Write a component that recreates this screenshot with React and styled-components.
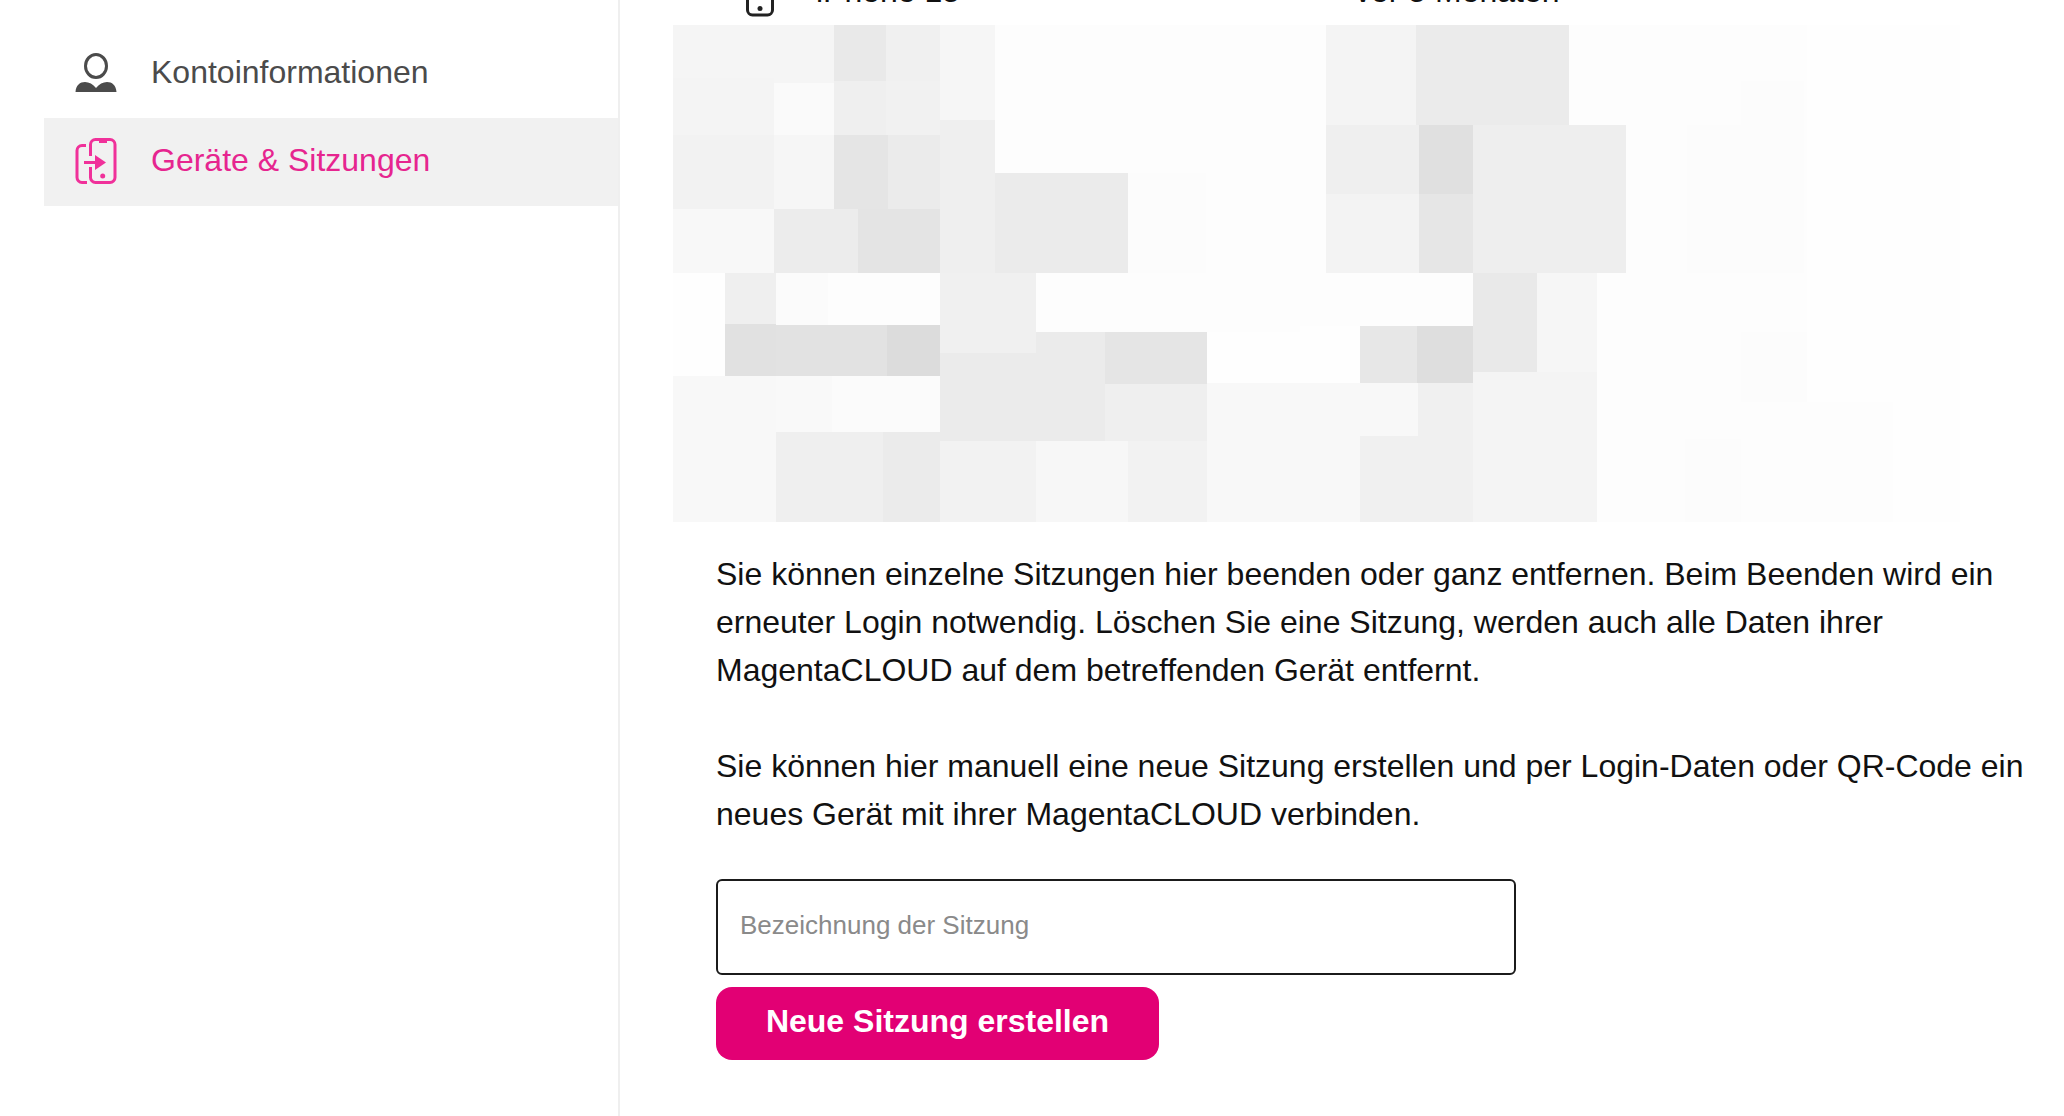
import React from "react";
import styled, { createGlobalStyle } from "styled-components";

const Global = createGlobalStyle`
  html, body { margin: 0; padding: 0; background: #fff; overflow: hidden; }
  body { font-family: "Liberation Sans", Arial, sans-serif; }
`;

const Page = styled.div`
  display: flex;
  width: 2064px;
  height: 1116px;
  overflow: hidden;
`;

const Sidebar = styled.nav`
  box-sizing: border-box;
  flex: 0 0 620px;
  height: 100%;
  padding: 30px 0 0 44px;
  border-right: 2px solid #efefef;
`;

const NavItem = styled.div`
  box-sizing: border-box;
  display: flex;
  align-items: center;
  height: 88px;
  padding: 0 0 4px 31px;
  gap: 34px;
  font-size: 32px;
  color: ${(p) => (p.$active ? "#e6258f" : "#4b4b4b")};
  background: ${(p) => (p.$active ? "#f1f1f1" : "transparent")};
`;

const NavIcon = styled.svg`
  display: block;
  flex: none;
  margin-top: ${(p) => p.$shift || 0}px;
`;

const Main = styled.main`
  flex: 1;
  min-width: 0;
  display: flex;
  flex-direction: column;
`;

const DeviceRow = styled.div`
  position: relative;
  height: 25px;
  overflow: hidden;
  flex: none;
`;

const DeviceText = styled.span`
  position: absolute;
  top: -26px;
  left: ${(p) => p.$left}px;
  font-size: 32px;
  line-height: 34px;
  color: #111;
  white-space: nowrap;
`;

const DeviceIcon = styled.svg`
  position: absolute;
  top: 0;
  left: 126px;
`;

const Mosaic = styled.svg`
  display: block;
  flex: none;
  margin-left: 53px;
`;

const Copy = styled.div`
  padding: 28px 0 0 96px;
  font-size: 32px;
  line-height: 48px;
  color: #111;
`;

const Paragraph = styled.p`
  margin: 0 0 48px;
  white-space: nowrap;
`;

const Form = styled.form`
  display: flex;
  flex-direction: column;
  align-items: flex-start;
  gap: 12px;
  margin: -7px 0 0 96px;
`;

const NameInput = styled.input`
  box-sizing: border-box;
  width: 800px;
  height: 96px;
  padding: 0 22px 3px;
  border: 2px solid #1b1b1b;
  border-radius: 6px;
  background: #fff;
  font: 26px "Liberation Sans", Arial, sans-serif;
  &::placeholder { color: #8a8a8a; opacity: 1; }
`;

const CreateButton = styled.button`
  width: 443px;
  height: 73px;
  padding: 0 0 4px;
  border: 0;
  border-radius: 16px;
  background: #e20074;
  color: #fff;
  font: bold 32px "Liberation Sans", Arial, sans-serif;
`;

const tiles = [
  [620, 25, 1340, 497, "#fdfdfd"],
  [673, 25, 101, 53, "#f5f5f5"], [673, 78, 101, 57, "#f4f4f4"], [673, 135, 101, 74, "#f2f2f2"], [673, 209, 101, 64, "#f8f8f8"],
  [774, 25, 60, 58, "#f5f5f5"], [774, 83, 60, 52, "#fafafa"], [774, 135, 60, 74, "#f6f6f6"], [774, 209, 84, 64, "#ececec"],
  [834, 25, 52, 56, "#e9e9e9"], [834, 81, 52, 54, "#efefef"], [834, 135, 54, 74, "#e5e5e5"],
  [886, 25, 54, 56, "#f0f0f0"], [886, 81, 54, 54, "#f1f1f1"], [888, 135, 52, 74, "#ebebeb"], [858, 209, 82, 64, "#e4e4e4"],
  [940, 25, 55, 95, "#f6f6f6"], [940, 120, 55, 153, "#efefef"],
  [995, 173, 133, 100, "#ebebeb"], [1128, 173, 78, 100, "#fcfcfc"],
  [1326, 25, 90, 100, "#f4f4f4"], [1416, 25, 153, 100, "#ebebeb"],
  [1326, 125, 93, 69, "#efefef"], [1419, 125, 54, 69, "#e0e0e0"], [1473, 125, 153, 148, "#eeeeee"],
  [1326, 194, 93, 79, "#f3f3f3"], [1419, 194, 54, 79, "#e6e6e6"],
  [1687, 125, 117, 148, "#fcfcfc"], [1741, 81, 63, 44, "#fcfcfc"],
  [673, 273, 52, 103, "#fefefe"], [725, 273, 51, 51, "#efefef"], [725, 324, 51, 52, "#e1e1e1"],
  [776, 273, 52, 52, "#fbfbfb"], [776, 325, 111, 51, "#e2e2e2"], [887, 325, 53, 51, "#dcdcdc"],
  [940, 273, 96, 80, "#f0f0f0"], [940, 353, 165, 88, "#ebebeb"], [1036, 332, 69, 21, "#ebebeb"],
  [1105, 332, 102, 52, "#e5e5e5"], [1105, 384, 102, 57, "#efefef"], [1207, 332, 93, 51, "#fefefe"], [1300, 326, 60, 57, "#fefefe"],
  [673, 376, 103, 146, "#f8f8f8"], [776, 376, 56, 56, "#f9f9f9"], [832, 376, 108, 56, "#fbfbfb"],
  [776, 432, 107, 90, "#efefef"], [883, 432, 57, 90, "#ebebeb"],
  [940, 441, 96, 81, "#f2f2f2"], [1036, 441, 92, 81, "#f7f7f7"], [1128, 441, 79, 81, "#f2f2f2"],
  [1207, 383, 211, 53, "#f8f8f8"], [1207, 436, 153, 86, "#f8f8f8"], [1360, 436, 113, 86, "#f0f0f0"], [1418, 383, 55, 53, "#f0f0f0"],
  [1360, 326, 57, 57, "#e7e7e7"], [1417, 326, 56, 57, "#dedede"],
  [1473, 273, 64, 99, "#e9e9e9"], [1537, 273, 60, 99, "#f6f6f6"], [1473, 372, 124, 150, "#f4f4f4"],
  [1741, 332, 66, 70, "#fcfcfc"], [1685, 439, 56, 83, "#fcfcfc"],
  [1807, 25, 153, 497, "#fefefe"], [1807, 402, 86, 120, "#fdfdfd"],
];

const UserIcon = () => (
  <NavIcon width="42" height="40" viewBox="0 0 42 40" fill="none">
    <ellipse cx="21" cy="14" rx="10.5" ry="11.5" stroke="#4b4b4b" strokeWidth="3" />
    <path d="M0.500 40C1 33 5 30 10 30C14 30 18 32 21 36C24 32 28 30 32 30C37 30 41 33 41.500 40Z" fill="#4b4b4b" />
  </NavIcon>
);

const SessionIcon = () => (
  <NavIcon $shift={2} width="42" height="46" viewBox="0 0 42 46" fill="none" stroke="#f0319a" strokeWidth="3">
    <path d="M15.500 18V6.500a5 5 0 0 1 5-5H35a5 5 0 0 1 5 5v33a5 5 0 0 1-5 5H20.500a5 5 0 0 1-5-5V29" />
    <path d="M11 7.500H7a5 5 0 0 0-5 5v27a5 5 0 0 0 5 5h5" />
    <path d="M24 1.500h8V5h-8z" fill="#f0319a" stroke="none" />
    <path d="M9 24.500h12" />
    <path d="M20 17l11 7.500-11 7.500z" fill="#f0319a" stroke="none" />
    <circle cx="27.700" cy="38" r="2.500" fill="#f0319a" stroke="none" />
  </NavIcon>
);

export default function App() {
  return (
    <Page>
      <Global />
      <Sidebar>
        <NavItem><UserIcon />Kontoinformationen</NavItem>
        <NavItem $active><SessionIcon />Geräte &amp; Sitzungen</NavItem>
      </Sidebar>
      <Main>
        <DeviceRow>
          <DeviceIcon width="28" height="25" viewBox="0 0 28 25" fill="none">
            <rect x="1.500" y="-20" width="25" height="35" rx="5" stroke="#222" strokeWidth="3" />
            <circle cx="14" cy="8.500" r="2.500" fill="#222" />
          </DeviceIcon>
          <DeviceText $left={196}>iPhone 15</DeviceText>
          <DeviceText $left={735}>vor 5 Monaten</DeviceText>
        </DeviceRow>
        <Mosaic width="1444" height="497" viewBox="673 25 1444 497">
          {tiles.map(([x, y, w, h, c], i) => (
            <rect key={i} x={x} y={y} width={w} height={h} fill={c} shapeRendering="crispEdges" />
          ))}
        </Mosaic>
        <Copy>
          <Paragraph>
            Sie können einzelne Sitzungen hier beenden oder ganz entfernen. Beim Beenden wird ein<br />
            erneuter Login notwendig. Löschen Sie eine Sitzung, werden auch alle Daten ihrer<br />
            MagentaCLOUD auf dem betreffenden Gerät entfernt.
          </Paragraph>
          <Paragraph>
            Sie können hier manuell eine neue Sitzung erstellen und per Login-Daten oder QR-Code ein<br />
            neues Gerät mit ihrer MagentaCLOUD verbinden.
          </Paragraph>
        </Copy>
        <Form onSubmit={(e) => e.preventDefault()}>
          <NameInput placeholder="Bezeichnung der Sitzung" />
          <CreateButton>Neue Sitzung erstellen</CreateButton>
        </Form>
      </Main>
    </Page>
  );
}
